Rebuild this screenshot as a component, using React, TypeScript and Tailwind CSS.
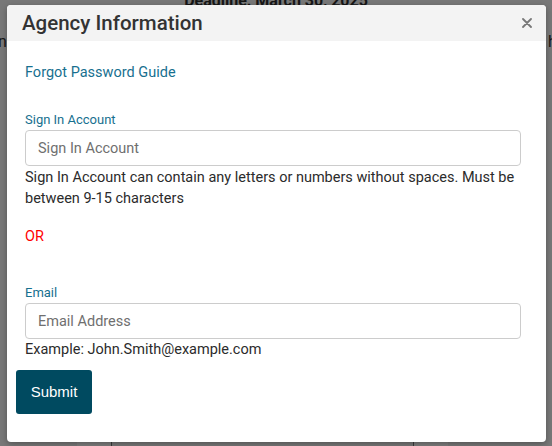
import React from "react";

/* =========================
   MODAL: AGENCY INFORMATION
========================= */
export default function App() {
  return (
    <div
      className="relative w-[552px] h-[446px] overflow-hidden bg-[#787878]"
      style={{ fontFamily: "Roboto, 'Liberation Sans', sans-serif" }}
    >
      {/* page behind the overlay */}
      <div className="absolute left-0 top-[-11px] w-full text-center text-[16px] font-bold text-[#161616]">
        Deadline: March 30, 2025
      </div>
      <div className="absolute left-[-2px] top-[30px] text-[16px] text-[#161616]">n</div>
      <div className="absolute left-[548px] top-[30px] text-[16px] text-[#161616]">h</div>
      <div className="absolute left-[77px] top-[436px] w-[35px] h-[10px] bg-[#7e7e7e] border-r border-[#3a3a3a]" />
      <div className="absolute left-[413px] top-[436px] w-[35px] h-[10px] bg-[#7e7e7e] border-l border-[#3a3a3a]" />

      {/* dialog */}
      <div className="absolute left-[7px] top-[5px] w-[539px] h-[437px] bg-white rounded-[4px] overflow-hidden shadow-[0_2px_6px_rgba(0,0,0,0.3)]">
        <div className="flex items-center justify-between h-[36px] bg-[#f3f3f3] pl-[15px] pr-[14px]">
          <h2 className="text-[20.5px] font-medium text-[#333]">Agency Information</h2>
          <svg width="10" height="10" viewBox="0 0 10 10" className="text-[#777]">
            <path d="M1 1 L9 9 M9 1 L1 9" stroke="currentColor" strokeWidth="1.8" strokeLinecap="round" />
          </svg>
        </div>

        <div className="pl-[18px] pr-[25px] pt-[22px]">
          <a className="block text-[14.5px] leading-[20px] text-[#17708f]">Forgot Password Guide</a>

          <label className="block mt-[29px] text-[13px] leading-[16px] text-[#17708f]">
            Sign In Account
          </label>
          <input
            placeholder="Sign In Account"
            className="mt-[2px] block w-full h-[36px] px-[12px] text-[14.5px] border border-[#cccccc] rounded-[4px] placeholder:text-[#6f6f6f] outline-none"
          />
          <p className="pt-[1px] text-[14.5px] leading-[21px] text-[#2b2b2b]">
            Sign In Account can contain any letters or numbers without spaces. Must be between
            9-15 characters
          </p>

          <p className="mt-[18px] text-[14.5px] leading-[20px] text-[#ff0000]">OR</p>

          <label className="block mt-[38px] text-[13px] leading-[16px] text-[#17708f]">Email</label>
          <input
            placeholder="Email Address"
            className="mt-[2px] block w-full h-[36px] px-[12px] text-[14.5px] border border-[#cccccc] rounded-[4px] placeholder:text-[#6f6f6f] outline-none"
          />
          <p className="pt-[1px] text-[14.5px] leading-[20px] text-[#2b2b2b]">
            Example: John.Smith@example.com
          </p>

          <button
            className="mt-[10px] ml-[-9px] w-[76px] h-[44px] rounded-[3px] bg-[#004a60] text-white text-[15px]"
            style={{ fontFamily: "'Liberation Sans', Arial, sans-serif" }}
          >
            Submit
          </button>
        </div>
      </div>
    </div>
  );
}
